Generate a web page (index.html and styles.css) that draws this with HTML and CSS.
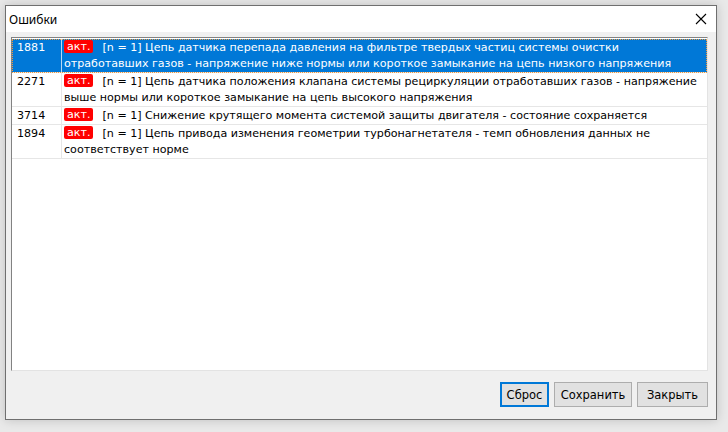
FILE: index.html
```html
<!DOCTYPE html>
<html lang="ru">
<head>
<meta charset="utf-8">
<title>Ошибки</title>
<link rel="stylesheet" href="styles.css">
</head>
<body>
<div class="window">
  <div class="titlebar">
    <span class="title">Ошибки</span>
    <svg class="close" width="12" height="12" viewBox="0 0 12 12"><path d="M1 1 L11 11 M11 1 L1 11" stroke="#000" stroke-width="1.1" fill="none"/></svg>
  </div>
  <div class="content">
    <div class="list">
      <div class="row selected">
        <div class="code">1881</div>
        <div class="desc"><span class="badge">акт.</span><span class="msg">[n = 1] Цепь датчика перепада давления на фильтре твердых частиц системы очистки<br>отработавших газов - напряжение ниже нормы или короткое замыкание на цепь низкого напряжения</span></div>
      </div>
      <div class="row">
        <div class="code">2271</div>
        <div class="desc"><span class="badge">акт.</span><span class="msg">[n = 1] Цепь датчика положения клапана системы рециркуляции отработавших газов - напряжение<br>выше нормы или короткое замыкание на цепь высокого напряжения</span></div>
      </div>
      <div class="row">
        <div class="code">3714</div>
        <div class="desc"><span class="badge">акт.</span><span class="msg">[n = 1] Снижение крутящего момента системой защиты двигателя - состояние сохраняется</span></div>
      </div>
      <div class="row">
        <div class="code">1894</div>
        <div class="desc"><span class="badge">акт.</span><span class="msg">[n = 1] Цепь привода изменения геометрии турбонагнетателя - темп обновления данных не<br>соответствует норме</span></div>
      </div>
    </div>
    <div class="buttons">
      <button class="btn btn-focus w49">Сброс</button>
      <button class="btn w78">Сохранить</button>
      <button class="btn w71">Закрыть</button>
    </div>
  </div>
</div>
</body>
</html>
```
FILE: styles.css
```css
html, body {
  margin: 0;
  padding: 0;
}
body {
  width: 728px;
  height: 432px;
  background: #e9e9e9;
  overflow: hidden;
  font-family: "DejaVu Sans", "Liberation Sans", sans-serif;
  font-size: 11.1px;
  color: #000;
}
.window {
  margin: 5px 0 0 5px;
  width: 710px;
  height: 413px;
  border: 1px solid #6f6f6f;
  background: #f0f0f0;
  display: flex;
  flex-direction: column;
  box-shadow: 0 0 10px rgba(0,0,0,0.18);
}
.titlebar {
  height: 26px;
  background: #fff;
  display: flex;
  align-items: center;
  justify-content: space-between;
  padding: 0 9px 0 3px;
}
.title {
  font-family: "Noto Sans", "Open Sans", sans-serif;
  font-size: 12px;
}
.content {
  flex: 1;
  display: flex;
  flex-direction: column;
  padding: 5px 8px 0 5px;
}
.list {
  flex: 1;
  background: #fff;
  border-top: 1px solid #828282;
  border-left: 1px solid #828282;
  border-right: 1px solid #e3e3e3;
  border-bottom: 1px solid #e3e3e3;
  padding: 1px 0 0 0;
}
.row {
  display: flex;
  line-height: 16px;
  border-bottom: 1px solid #e6e6e6;
}
.code {
  width: 50px;
  padding: 1px 0 0 5px;
  box-sizing: border-box;
  border-right: 1px solid #e6e6e6;
  flex: none;
}
.desc {
  flex: 1;
  padding: 1px 4px 0 2px;
  white-space: nowrap;
}
.badge {
  display: inline-block;
  background: #ff0000;
  color: #fff;
  line-height: 13px;
  padding: 0 2px 0 3px;
  border-radius: 2px;
  margin-right: 10px;
  vertical-align: 1px;
}
.row.selected {
  background: #0078d7;
  color: #fff;
  outline: 1px dotted #f09a3e;
  outline-offset: -1px;
}
.row.selected .code {
  border-right-color: #b9d8f2;
}
.buttons {
  display: flex;
  justify-content: flex-end;
  gap: 5px;
  padding: 11px 0 12px;
}
.btn {
  height: 25px;
  background: #e1e1e1;
  border: 1px solid #adadad;
  font-family: "DejaVu Sans", sans-serif;
  font-size: 11.5px;
  color: #000;
  padding: 0;
  margin: 0;
}
.btn-focus {
  border: 2px solid #0078d7;
}
.w49 { width: 49px; }
.w78 { width: 78px; }
.w71 { width: 71px; }
```
